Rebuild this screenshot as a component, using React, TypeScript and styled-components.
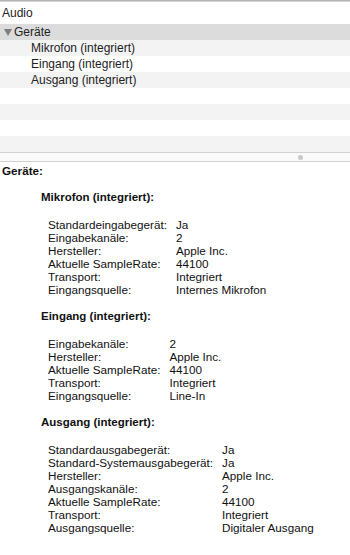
import { Fragment } from "react";
import styled, { createGlobalStyle } from "styled-components";

const GlobalStyle = createGlobalStyle`
    html, body {
        margin: 0;
        padding: 0;
        background: #ffffff;
    }
    body {
        font-family: "Liberation Sans", Arial, sans-serif;
        color: #111111;
        -webkit-font-smoothing: antialiased;
    }
`;

type Row = [string, string];

const sections: { title: string; rows: Row[] }[] = [
    {
        title: "Mikrofon (integriert):",
        rows: [
            ["Standardeingabegerät:", "Ja"],
            ["Eingabekanäle:", "2"],
            ["Hersteller:", "Apple Inc."],
            ["Aktuelle SampleRate:", "44100"],
            ["Transport:", "Integriert"],
            ["Eingangsquelle:", "Internes Mikrofon"],
        ],
    },
    {
        title: "Eingang (integriert):",
        rows: [
            ["Eingabekanäle:", "2"],
            ["Hersteller:", "Apple Inc."],
            ["Aktuelle SampleRate:", "44100"],
            ["Transport:", "Integriert"],
            ["Eingangsquelle:", "Line-In"],
        ],
    },
    {
        title: "Ausgang (integriert):",
        rows: [
            ["Standardausgabegerät:", "Ja"],
            ["Standard-Systemausgabegerät:", "Ja"],
            ["Hersteller:", "Apple Inc."],
            ["Ausgangskanäle:", "2"],
            ["Aktuelle SampleRate:", "44100"],
            ["Transport:", "Integriert"],
            ["Ausgangsquelle:", "Digitaler Ausgang"],
        ],
    },
];

const devices = ["Mikrofon (integriert)", "Eingang (integriert)", "Ausgang (integriert)"];

function App() {
    return (
        <Window>
            <GlobalStyle />
            <TopEdge />
            <SourceList>
                <CategoryRow>Audio</CategoryRow>
                <GroupRow>
                    <Disclosure width="8" height="7" viewBox="0 0 8 7">
                        <path d="M0 0 H8 L4 7 Z" fill="#7d7d7d" />
                    </Disclosure>
                    Geräte
                </GroupRow>
                {devices.map((d, i) => (
                    <ItemRow key={d} $striped={i % 2 === 0}>{d}</ItemRow>
                ))}
                {[0, 1, 2, 3].map((i) => (
                    <ItemRow key={i} $striped={i % 2 === 1} />
                ))}
            </SourceList>
            <Splitter>
                <Grip />
            </Splitter>
            <Detail>
                <PaneTitle>Geräte:</PaneTitle>
                {sections.map((s) => (
                    <Section key={s.title}>
                        <SectionTitle>{s.title}</SectionTitle>
                        <PropTable>
                            {s.rows.map(([k, v]) => (
                                <Fragment key={k}>
                                    <Key>{k}</Key>
                                    <Value>{v}</Value>
                                </Fragment>
                            ))}
                        </PropTable>
                    </Section>
                ))}
            </Detail>
        </Window>
    );
}

const Window = styled.div`
    width: 350px;
    height: 555px;
    overflow: hidden;
    display: flex;
    flex-direction: column;
    background: #ffffff;
`;

const TopEdge = styled.div`
    height: 2px;
    flex: none;
    border-top: 1px solid #b3b3b3;
    background: #d6d6d6;
    box-sizing: border-box;
`;

const SourceList = styled.div`
    display: flex;
    flex-direction: column;
    flex: none;
    font-size: 12px;
`;

const CategoryRow = styled.div`
    height: 22px;
    display: flex;
    align-items: center;
    padding-left: 2px;
    color: #222222;
`;

const GroupRow = styled.div`
    height: 16px;
    display: flex;
    align-items: center;
    gap: 2px;
    padding-left: 4px;
    background: #dcdcdc;
    color: #222222;
`;

const Disclosure = styled.svg`
    flex: none;
`;

const ItemRow = styled.div<{ $striped?: boolean }>`
    height: 16px;
    display: flex;
    align-items: center;
    padding-left: 31px;
    background: ${(p) => (p.$striped ? "#f3f3f3" : "#ffffff")};
    color: #222222;
`;

const Splitter = styled.div`
    height: 10px;
    flex: none;
    box-sizing: border-box;
    border-top: 1px solid #d2d2d2;
    border-bottom: 1px solid #d2d2d2;
    background: #fafafa;
    display: flex;
    align-items: center;
    justify-content: flex-end;
    padding-right: 47px;
`;

const Grip = styled.div`
    width: 5px;
    height: 5px;
    border-radius: 50%;
    background: #c9c9c9;
`;

const Detail = styled.div`
    flex: 1;
    padding-top: 2px;
    font-size: 11.7px;
    line-height: 13px;
    color: #111111;
`;

const PaneTitle = styled.div`
    font-weight: bold;
    padding-left: 2px;
`;

const Section = styled.div`
    margin-top: 14px;
    padding-left: 41px;
`;

const SectionTitle = styled.div`
    font-weight: bold;
    font-size: 11.5px;
`;

const PropTable = styled.div`
    display: grid;
    grid-template-columns: max-content 1fr;
    column-gap: 9px;
    margin-top: 14px;
    padding-left: 7px;
`;

const Key = styled.div`
    white-space: nowrap;
`;

const Value = styled.div`
    white-space: nowrap;
`;

export default App;
